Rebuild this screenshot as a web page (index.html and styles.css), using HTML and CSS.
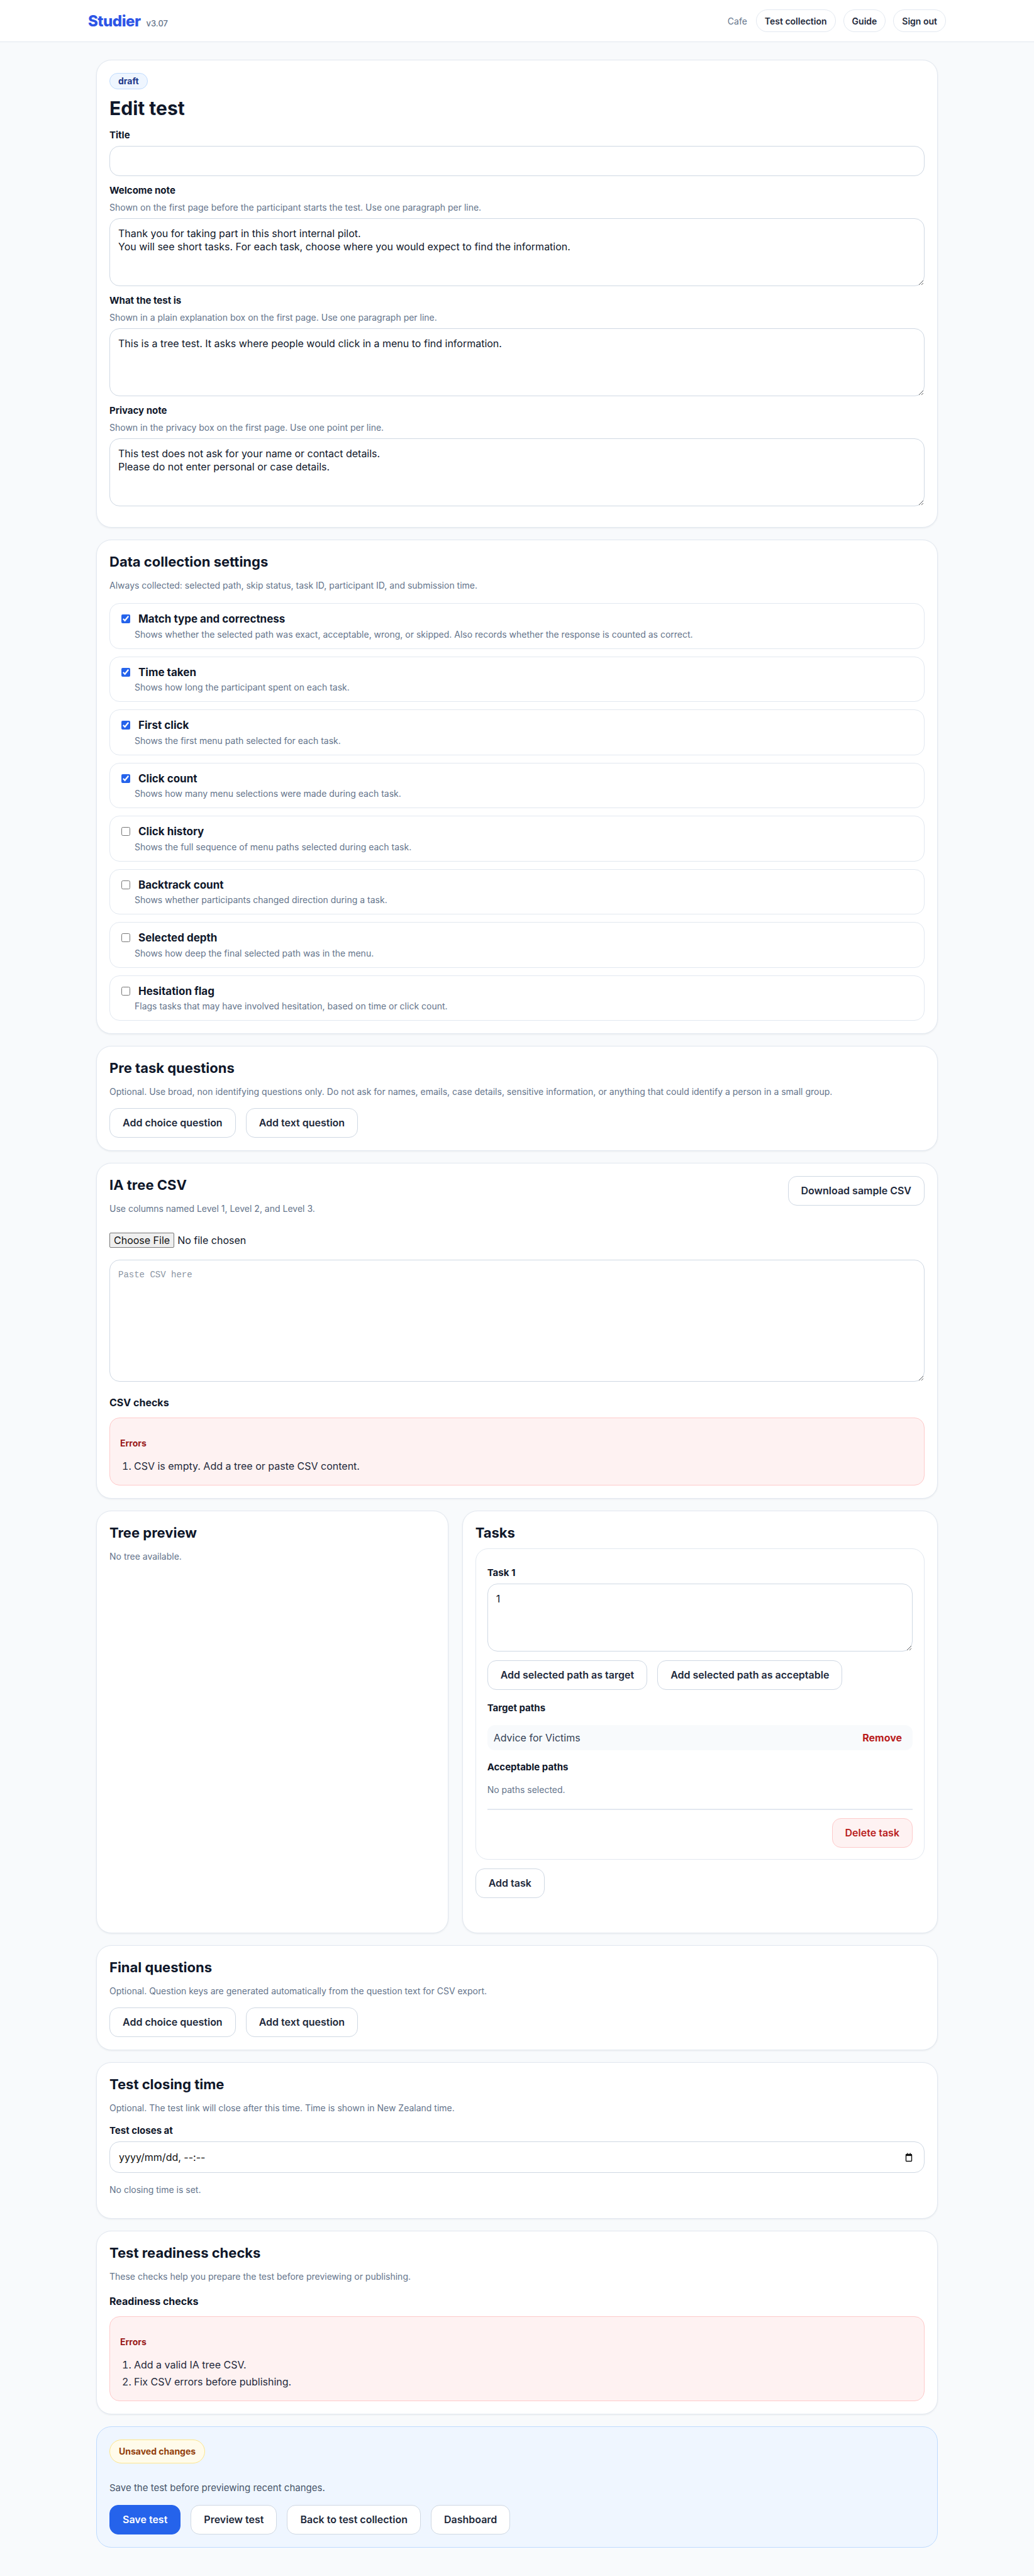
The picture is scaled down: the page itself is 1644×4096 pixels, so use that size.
FILE: index.html
```html
<!DOCTYPE html>
<html lang="en">
<head>
    <meta charset="UTF-8">
    <meta name="viewport" content="width=device-width, initial-scale=1.0">
    <title>Edit test · Studier</title>
    <link rel="stylesheet" href="styles.css">
</head>
<body>
    <header class="topbar">
        <div class="topbar-inner">
            <a class="brand" href="#">Studier <span class="version">v3.07</span></a>
            <nav class="nav">
                <span class="nav-user">Cafe</span>
                <a class="nav-pill" href="#">Test collection</a>
                <a class="nav-pill" href="#">Guide</a>
                <a class="nav-pill" href="#">Sign out</a>
            </nav>
        </div>
    </header>

    <main class="page">
        <!-- basic details -->
        <section class="card">
            <span class="status-badge">draft</span>
            <h1>Edit test</h1>

            <div class="field">
                <label class="field-label" for="title">Title</label>
                <input class="input" id="title" type="text">
            </div>

            <div class="field">
                <label class="field-label" for="welcome">Welcome note</label>
                <p class="field-hint">Shown on the first page before the participant starts the test. Use one paragraph per line.</p>
                <textarea class="input textarea" id="welcome">Thank you for taking part in this short internal pilot.
You will see short tasks. For each task, choose where you would expect to find the information.</textarea>
            </div>

            <div class="field">
                <label class="field-label" for="about">What the test is</label>
                <p class="field-hint">Shown in a plain explanation box on the first page. Use one paragraph per line.</p>
                <textarea class="input textarea" id="about">This is a tree test. It asks where people would click in a menu to find information.</textarea>
            </div>

            <div class="field">
                <label class="field-label" for="privacy">Privacy note</label>
                <p class="field-hint">Shown in the privacy box on the first page. Use one point per line.</p>
                <textarea class="input textarea" id="privacy">This test does not ask for your name or contact details.
Please do not enter personal or case details.</textarea>
            </div>
        </section>

        <!-- data collection -->
        <section class="card">
            <h2>Data collection settings</h2>
            <p class="section-hint">Always collected: selected path, skip status, task ID, participant ID, and submission time.</p>

            <div class="options">
                <label class="option">
                    <span class="option-head"><input type="checkbox" checked><span class="option-title">Match type and correctness</span></span>
                    <span class="option-desc">Shows whether the selected path was exact, acceptable, wrong, or skipped. Also records whether the response is counted as correct.</span>
                </label>
                <label class="option">
                    <span class="option-head"><input type="checkbox" checked><span class="option-title">Time taken</span></span>
                    <span class="option-desc">Shows how long the participant spent on each task.</span>
                </label>
                <label class="option">
                    <span class="option-head"><input type="checkbox" checked><span class="option-title">First click</span></span>
                    <span class="option-desc">Shows the first menu path selected for each task.</span>
                </label>
                <label class="option">
                    <span class="option-head"><input type="checkbox" checked><span class="option-title">Click count</span></span>
                    <span class="option-desc">Shows how many menu selections were made during each task.</span>
                </label>
                <label class="option">
                    <span class="option-head"><input type="checkbox"><span class="option-title">Click history</span></span>
                    <span class="option-desc">Shows the full sequence of menu paths selected during each task.</span>
                </label>
                <label class="option">
                    <span class="option-head"><input type="checkbox"><span class="option-title">Backtrack count</span></span>
                    <span class="option-desc">Shows whether participants changed direction during a task.</span>
                </label>
                <label class="option">
                    <span class="option-head"><input type="checkbox"><span class="option-title">Selected depth</span></span>
                    <span class="option-desc">Shows how deep the final selected path was in the menu.</span>
                </label>
                <label class="option">
                    <span class="option-head"><input type="checkbox"><span class="option-title">Hesitation flag</span></span>
                    <span class="option-desc">Flags tasks that may have involved hesitation, based on time or click count.</span>
                </label>
            </div>
        </section>

        <section class="card">
            <h2>Pre task questions</h2>
            <p class="section-hint tight">Optional. Use broad, non identifying questions only. Do not ask for names, emails, case details, sensitive information, or anything that could identify a person in a small group.</p>
            <div class="btn-row">
                <button class="btn">Add choice question</button>
                <button class="btn">Add text question</button>
            </div>
        </section>

        <!-- tree upload -->
        <section class="card">
            <div class="card-head">
                <div>
                    <h2>IA tree CSV</h2>
                    <p class="section-hint flush">Use columns named Level 1, Level 2, and Level 3.</p>
                </div>
                <button class="btn">Download sample CSV</button>
            </div>

            <input class="file-input" type="file" accept=".csv">
            <textarea class="input textarea csv" placeholder="Paste CSV here"></textarea>

            <h3 class="sub-label">CSV checks</h3>
            <div class="alert">
                <h4>Errors</h4>
                <ol>
                    <li>CSV is empty. Add a tree or paste CSV content.</li>
                </ol>
            </div>
        </section>

        <div class="split">
            <section class="card">
                <h2>Tree preview</h2>
                <p class="muted">No tree available.</p>
            </section>

            <section class="card">
                <h2 class="tasks-title">Tasks</h2>
                <div class="task">
                    <label class="field-label" for="task1">Task 1</label>
                    <textarea class="input textarea" id="task1">1</textarea>
                    <div class="btn-row task-actions">
                        <button class="btn">Add selected path as target</button>
                        <button class="btn">Add selected path as acceptable</button>
                    </div>

                    <h4 class="paths-label">Target paths</h4>
                    <div class="path-item">
                        <span>Advice for Victims</span>
                        <button class="link-danger">Remove</button>
                    </div>

                    <h4 class="paths-label">Acceptable paths</h4>
                    <p class="muted">No paths selected.</p>

                    <div class="task-foot">
                        <button class="btn btn-danger">Delete task</button>
                    </div>
                </div>
                <div class="add-task">
                    <button class="btn">Add task</button>
                </div>
            </section>
        </div>

        <section class="card">
            <h2>Final questions</h2>
            <p class="section-hint tight">Optional. Question keys are generated automatically from the question text for CSV export.</p>
            <div class="btn-row">
                <button class="btn">Add choice question</button>
                <button class="btn">Add text question</button>
            </div>
        </section>

        <section class="card">
            <h2>Test closing time</h2>
            <p class="section-hint tight">Optional. The test link will close after this time. Time is shown in New Zealand time.</p>
            <label class="field-label" for="closes">Test closes at</label>
            <div class="input date-input" id="closes" tabindex="0">
                <span>yyyy/mm/dd, --:--</span>
                <svg width="12" height="15" viewBox="0 0 12 15" aria-hidden="true">
                    <rect x="1.5" y="2.5" width="9" height="11" rx="1" fill="none" stroke="#111" stroke-width="1.4"/>
                    <rect x="1.5" y="2.5" width="9" height="2.6" fill="#111"/>
                    <line x1="3.8" y1="0.6" x2="3.8" y2="3" stroke="#111" stroke-width="1.3"/>
                    <line x1="8.2" y1="0.6" x2="8.2" y2="3" stroke="#111" stroke-width="1.3"/>
                </svg>
            </div>
            <p class="muted closing-note">No closing time is set.</p>
        </section>

        <section class="card">
            <h2>Test readiness checks</h2>
            <p class="section-hint">These checks help you prepare the test before previewing or publishing.</p>
            <h3 class="sub-label">Readiness checks</h3>
            <div class="alert">
                <h4>Errors</h4>
                <ol>
                    <li>Add a valid IA tree CSV.</li>
                    <li>Fix CSV errors before publishing.</li>
                </ol>
            </div>
        </section>

        <!-- sticky save area -->
        <section class="savebar">
            <span class="unsaved">Unsaved changes</span>
            <p class="savebar-note">Save the test before previewing recent changes.</p>
            <div class="btn-row">
                <button class="btn btn-primary">Save test</button>
                <button class="btn">Preview test</button>
                <button class="btn">Back to test collection</button>
                <button class="btn">Dashboard</button>
            </div>
        </section>
    </main>
</body>
</html>
```

FILE: styles.css
```css
* {
    box-sizing: border-box;
}

body {
    margin: 0;
    background: #f8fafc;
    color: #0f172a;
    font-family: Inter, "Noto Sans", sans-serif;
    font-size: 15px;
}

/* top bar */

.topbar {
    background: #fff;
    border-bottom: 1px solid #e2e8f0;
}

.topbar-inner {
    max-width: 1400px;
    margin: 0 auto;
    padding: 15px 18px;
    display: flex;
    align-items: center;
    justify-content: space-between;
}

.brand {
    display: flex;
    align-items: baseline;
    gap: 9px;
    font-size: 24px;
    font-weight: 800;
    letter-spacing: -0.02em;
    color: #2d55e6;
    text-decoration: none;
}

.version {
    font-size: 13px;
    font-weight: 500;
    letter-spacing: 0;
    color: #64748b;
}

.nav {
    display: flex;
    align-items: center;
    gap: 12px;
}

.nav-user {
    font-size: 14px;
    color: #64748b;
    margin-right: 2px;
}

.nav-pill {
    height: 36px;
    display: inline-flex;
    align-items: center;
    padding: 0 13px;
    border: 1px solid #e2e8f0;
    border-radius: 999px;
    background: #fff;
    font-size: 14px;
    font-weight: 600;
    color: #1e293b;
    text-decoration: none;
}

/* layout */

.page {
    max-width: 1338px;
    margin: 0 auto;
    padding: 28px 0 44px;
    display: flex;
    flex-direction: column;
    gap: 19px;
}

.card {
    background: #fff;
    border: 1px solid #e2e8f0;
    border-radius: 24px;
    padding: 20px;
    box-shadow: 0 1px 3px rgba(15, 23, 42, 0.07);
}

.split {
    display: grid;
    grid-template-columns: minmax(0, 0.74fr) minmax(0, 1fr);
    gap: 22px;
}

h1 {
    margin: 12px 0 15px;
    font-size: 30px;
    line-height: 36px;
    font-weight: 700;
}

h2 {
    margin: 0 0 14px;
    font-size: 22px;
    line-height: 28px;
    font-weight: 700;
}

.status-badge {
    display: inline-block;
    padding: 3px 13px;
    border: 1px solid #bfdbfe;
    border-radius: 999px;
    background: #eff6ff;
    color: #1e3a8a;
    font-size: 14px;
    line-height: 18px;
    font-weight: 700;
}

/* form fields */

.field {
    margin-bottom: 13px;
}

.field-label {
    display: block;
    margin-bottom: 7px;
    font-size: 15px;
    line-height: 20px;
    font-weight: 700;
}

.field-hint {
    margin: 0 0 7px;
    font-size: 14px;
    line-height: 20px;
    color: #64748b;
}

.section-hint {
    margin: 0 0 18px;
    font-size: 14px;
    line-height: 20px;
    color: #64748b;
}

.section-hint.tight {
    margin-bottom: 16px;
}

.section-hint.flush {
    margin-bottom: 0;
}

.muted {
    margin: 0;
    font-size: 14px;
    line-height: 20px;
    color: #64748b;
}

.input {
    display: block;
    width: 100%;
    height: 48px;
    padding: 13px;
    border: 1px solid #cfd8e3;
    border-radius: 16px;
    background: #fff;
    font-family: inherit;
    font-size: 16px;
    line-height: 21px;
    color: #0f172a;
}

.textarea {
    height: 108px;
    resize: vertical;
}

.csv {
    height: 194px;
    margin-top: 19px;
    font-family: "Liberation Mono", "DejaVu Sans Mono", monospace;
    font-size: 14px;
}

.csv::placeholder {
    color: #8b95a3;
}

.file-input {
    display: block;
    font-family: inherit;
    font-size: 16px;
    color: #0f172a;
}

.file-input::file-selector-button {
    font-family: inherit;
    font-size: 16px;
    padding: 1px 6px;
    margin-right: 5px;
    border: 1px solid #767676;
    border-radius: 2px;
    background: #efefef;
    color: #111;
}

.date-input {
    height: 50px;
    display: flex;
    align-items: center;
    justify-content: space-between;
    padding: 0 18px 0 14px;
    color: #111;
}

.closing-note {
    margin: 17px 0 15px;
}

/* data collection options */

.options {
    display: flex;
    flex-direction: column;
    gap: 12px;
}

.option {
    display: block;
    padding: 12px 18px;
    border: 1px solid #e2e8f0;
    border-radius: 16px;
    cursor: pointer;
}

.option-head {
    display: flex;
    align-items: center;
    gap: 13px;
}

.option-head input {
    width: 14px;
    height: 14px;
    margin: 0;
    accent-color: #2563eb;
}

.option-title {
    font-size: 17px;
    line-height: 24px;
    font-weight: 700;
}

.option-desc {
    display: block;
    margin-top: 2.5px;
    padding-left: 21px;
    font-size: 14px;
    line-height: 20px;
    color: #64748b;
}

/* buttons */

.btn-row {
    display: flex;
    flex-wrap: wrap;
    gap: 16px;
}

.btn {
    padding: 12px 20px;
    border: 1px solid #cfd8e3;
    border-radius: 14px;
    background: #fff;
    font-family: inherit;
    font-size: 16px;
    line-height: 21px;
    font-weight: 600;
    color: #1e293b;
    cursor: pointer;
}

.btn-primary {
    background: #2563eb;
    border-color: #2563eb;
    color: #fff;
}

.btn-danger {
    background: #fef2f2;
    border-color: #fecaca;
    color: #b91c1c;
}

.link-danger {
    padding: 0 7px;
    border: 0;
    background: none;
    font-family: inherit;
    font-size: 16px;
    font-weight: 700;
    color: #b91c1c;
    cursor: pointer;
}

/* csv + checks */

.card-head {
    display: flex;
    justify-content: space-between;
    align-items: flex-start;
    margin-bottom: 28px;
}

.sub-label {
    margin: 22px 0 13px;
    font-size: 16px;
    line-height: 22px;
    font-weight: 700;
}

.section-hint + .sub-label {
    margin-top: 0;
}

.alert {
    padding: 18px 16px;
    border: 1px solid #fecaca;
    border-radius: 16px;
    background: #fef2f2;
}

.alert h4 {
    margin: 12px 0 14px;
    font-size: 14px;
    line-height: 20px;
    color: #991b1b;
}

.alert ol {
    margin: 0;
    padding-left: 3px;
    list-style-position: inside;
    font-size: 16px;
    line-height: 24px;
    color: #1e293b;
}

.alert li + li {
    margin-top: 3px;
}

/* tasks */

.tasks-title {
    margin-bottom: 11px;
}

.task {
    padding: 28px 18px 18px;
    border: 1px solid #e2e8f0;
    border-radius: 20px;
}

.task-actions {
    margin-top: 14px;
}

.paths-label {
    margin: 19px 0 17px;
    font-size: 15px;
    line-height: 20px;
    font-weight: 700;
}

.path-item + .paths-label {
    margin-top: 17px;
}

.paths-label + .muted {
    margin-top: -1px;
}

.path-item {
    height: 40px;
    display: flex;
    align-items: center;
    justify-content: space-between;
    padding: 0 10px;
    border-radius: 12px;
    background: #f8fafc;
    font-size: 16px;
    color: #334155;
}

.task-foot {
    display: flex;
    justify-content: flex-end;
    margin-top: 20px;
    padding-top: 13px;
    border-top: 2px solid #e2e8f0;
}

.add-task {
    margin: 14px 0 35px;
}

/* save bar */

.savebar {
    padding: 20px;
    border: 1px solid #bfdbfe;
    border-radius: 24px;
    background: #eff6ff;
}

.unsaved {
    display: inline-block;
    padding: 8px 14px;
    border: 1px solid #fde68a;
    border-radius: 999px;
    background: #fffbeb;
    color: #92400e;
    font-size: 14px;
    line-height: 20px;
    font-weight: 700;
}

.savebar-note {
    margin: 28px 0 16px;
    font-size: 15px;
    line-height: 22px;
    color: #475569;
}
```
